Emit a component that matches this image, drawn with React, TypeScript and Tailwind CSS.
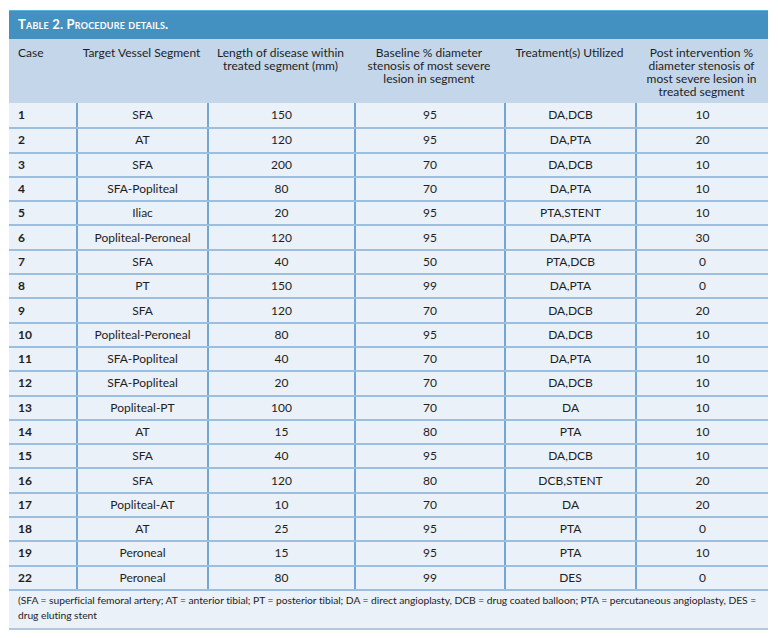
import React from 'react';

// Rows of the procedure table
const rows: [string, string, string, string, string, string][] = [
  ['1', 'SFA', '150', '95', 'DA,DCB', '10'],
  ['2', 'AT', '120', '95', 'DA,PTA', '20'],
  ['3', 'SFA', '200', '70', 'DA,DCB', '10'],
  ['4', 'SFA-Popliteal', '80', '70', 'DA,PTA', '10'],
  ['5', 'Iliac', '20', '95', 'PTA,STENT', '10'],
  ['6', 'Popliteal-Peroneal', '120', '95', 'DA,PTA', '30'],
  ['7', 'SFA', '40', '50', 'PTA,DCB', '0'],
  ['8', 'PT', '150', '99', 'DA,PTA', '0'],
  ['9', 'SFA', '120', '70', 'DA,DCB', '20'],
  ['10', 'Popliteal-Peroneal', '80', '95', 'DA,DCB', '10'],
  ['11', 'SFA-Popliteal', '40', '70', 'DA,PTA', '10'],
  ['12', 'SFA-Popliteal', '20', '70', 'DA,DCB', '10'],
  ['13', 'Popliteal-PT', '100', '70', 'DA', '10'],
  ['14', 'AT', '15', '80', 'PTA', '10'],
  ['15', 'SFA', '40', '95', 'DA,DCB', '10'],
  ['16', 'SFA', '120', '80', 'DCB,STENT', '20'],
  ['17', 'Popliteal-AT', '10', '70', 'DA', '20'],
  ['18', 'AT', '25', '95', 'PTA', '0'],
  ['19', 'Peroneal', '15', '95', 'PTA', '10'],
  ['22', 'Peroneal', '80', '99', 'DES', '0'],
];

const widths = ['w-[67px]', 'w-[131px]', 'w-[147px]', 'w-[150px]', 'w-[131px]', 'w-[133px]'];

const headers = [
  'Case',
  'Target Vessel Segment',
  'Length of disease within treated segment (mm)',
  'Baseline % diameter stenosis of most severe lesion in segment',
  'Treatment(s) Utilized',
  'Post intervention % diameter stenosis of most severe lesion in treated segment',
];

const App: React.FC = () => {
  return (
    <div className="w-[778px] h-[638px] bg-white pt-[10px] pl-[9px] text-[#1e1e1e]" style={{ fontFamily: 'Lato, "Open Sans", sans-serif' }}>
      <div className="w-[759px]">
        <div className="h-[29px] bg-[#4391c0] border-t border-[#5fb0dd] flex items-center pl-[9px]">
          <span className="text-white font-bold text-[13px] tracking-[0.2px]" style={{ fontVariant: 'small-caps' }}>
            Table 2. Procedure details.
          </span>
        </div>

        <div className="flex h-[64px] bg-[#c4d7ea] text-[12px] leading-[13px]">
          {headers.map((h, i) => (
            <div
              key={i}
              className={`${widths[i]} pt-[7px] ${i === 0 ? 'pl-[9px] text-left' : i === 1 ? 'px-[2px] text-center whitespace-nowrap' : 'px-[8px] text-center'}`}
            >
              {h}
            </div>
          ))}
        </div>

        {rows.map((r, ri) => (
          <div
            key={ri}
            className={`flex h-[24.3px] bg-[#eaf1f9] text-[12px] ${ri > 0 ? 'border-t-2 border-[#9cbfe0]' : ''}`}
          >
            {r.map((c, ci) => (
              <div
                key={ci}
                className={`${widths[ci]} flex items-center ${
                  ci === 0 ? 'pl-[9px] font-bold' : 'justify-center border-l-2 border-[#74a6d4]'
                }`}
              >
                {c}
              </div>
            ))}
          </div>
        ))}

        <div className="bg-[#eaf1f9] border-t-2 border-[#9cbfe0] border-b-2 border-b-[#b3c8dd] pl-[9px] pr-[2px] pt-[2px] pb-[5px] text-[10.3px] tracking-[-0.05px] leading-[15px]">
          (SFA = superficial femoral artery; AT = anterior tibial; PT = posterior tibial; DA = direct angioplasty, DCB = drug coated balloon; PTA = percutaneous angioplasty, DES = drug eluting stent
        </div>
      </div>
    </div>
  );
};

export default App;
